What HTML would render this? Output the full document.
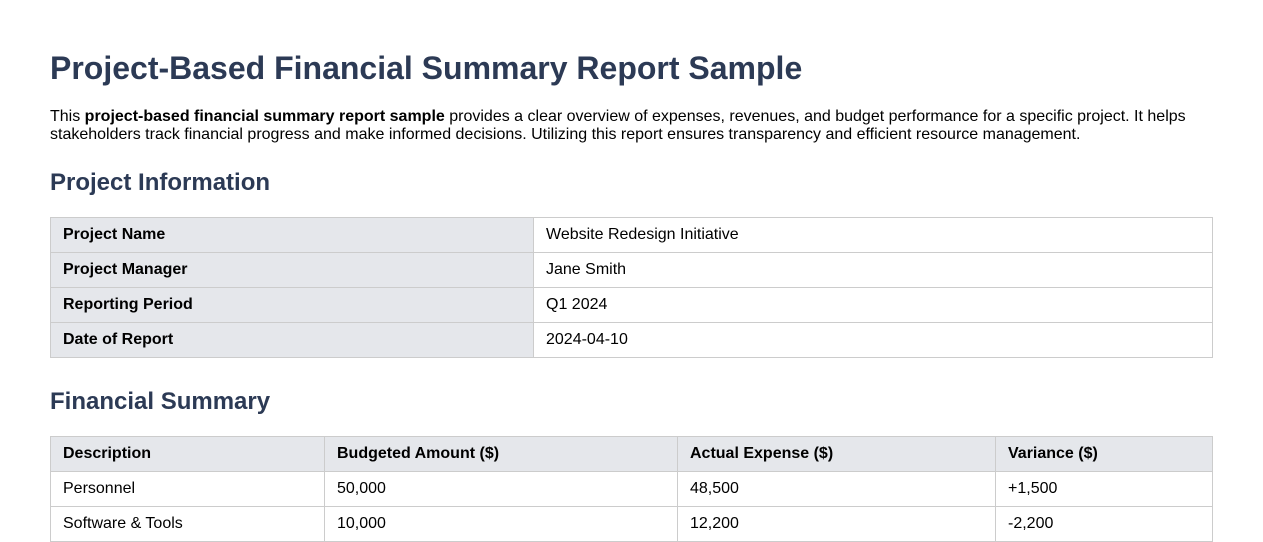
<!DOCTYPE html>
<html><head><style>
body{margin:0;font-family:"Liberation Sans",Arial,sans-serif;color:#000;background:#fff;}
h1{position:absolute;left:50px;top:49px;margin:0;font-size:32px;color:#2c3a55;font-weight:bold;line-height:38px;}
p{position:absolute;left:50px;top:108px;width:1163px;margin:0;font-size:16px;line-height:18px;}
h2{position:absolute;left:50px;margin:0;font-size:24px;color:#2c3a55;font-weight:bold;line-height:28px;}
table{position:absolute;left:50px;width:1163px;border-collapse:collapse;font-size:16px;}
td,th{border:1px solid #ccc;height:35px;padding:0 12px;text-align:left;box-sizing:border-box;}
th,td.k{background:#e5e7eb;font-weight:bold;}
</style></head><body>
<h1>Project-Based Financial Summary Report Sample</h1>
<p>This <b>project-based financial summary report sample</b> provides a clear overview of expenses, revenues, and budget performance for a specific project. It helps stakeholders track financial progress and make informed decisions. Utilizing this report ensures transparency and efficient resource management.</p>
<h2 style="top:169px">Project Information</h2>
<table style="top:217px">
<tr><td class="k" style="width:483px">Project Name</td><td>Website Redesign Initiative</td></tr>
<tr><td class="k">Project Manager</td><td>Jane Smith</td></tr>
<tr><td class="k">Reporting Period</td><td>Q1 2024</td></tr>
<tr><td class="k">Date of Report</td><td>2024-04-10</td></tr>
</table>
<h2 style="top:388px">Financial Summary</h2>
<table style="top:436px">
<tr><th style="width:274px">Description</th><th style="width:353px">Budgeted Amount ($)</th><th style="width:318px">Actual Expense ($)</th><th>Variance ($)</th></tr>
<tr><td>Personnel</td><td>50,000</td><td>48,500</td><td>+1,500</td></tr>
<tr><td>Software &amp; Tools</td><td>10,000</td><td>12,200</td><td>-2,200</td></tr>
</table>
</body></html>
